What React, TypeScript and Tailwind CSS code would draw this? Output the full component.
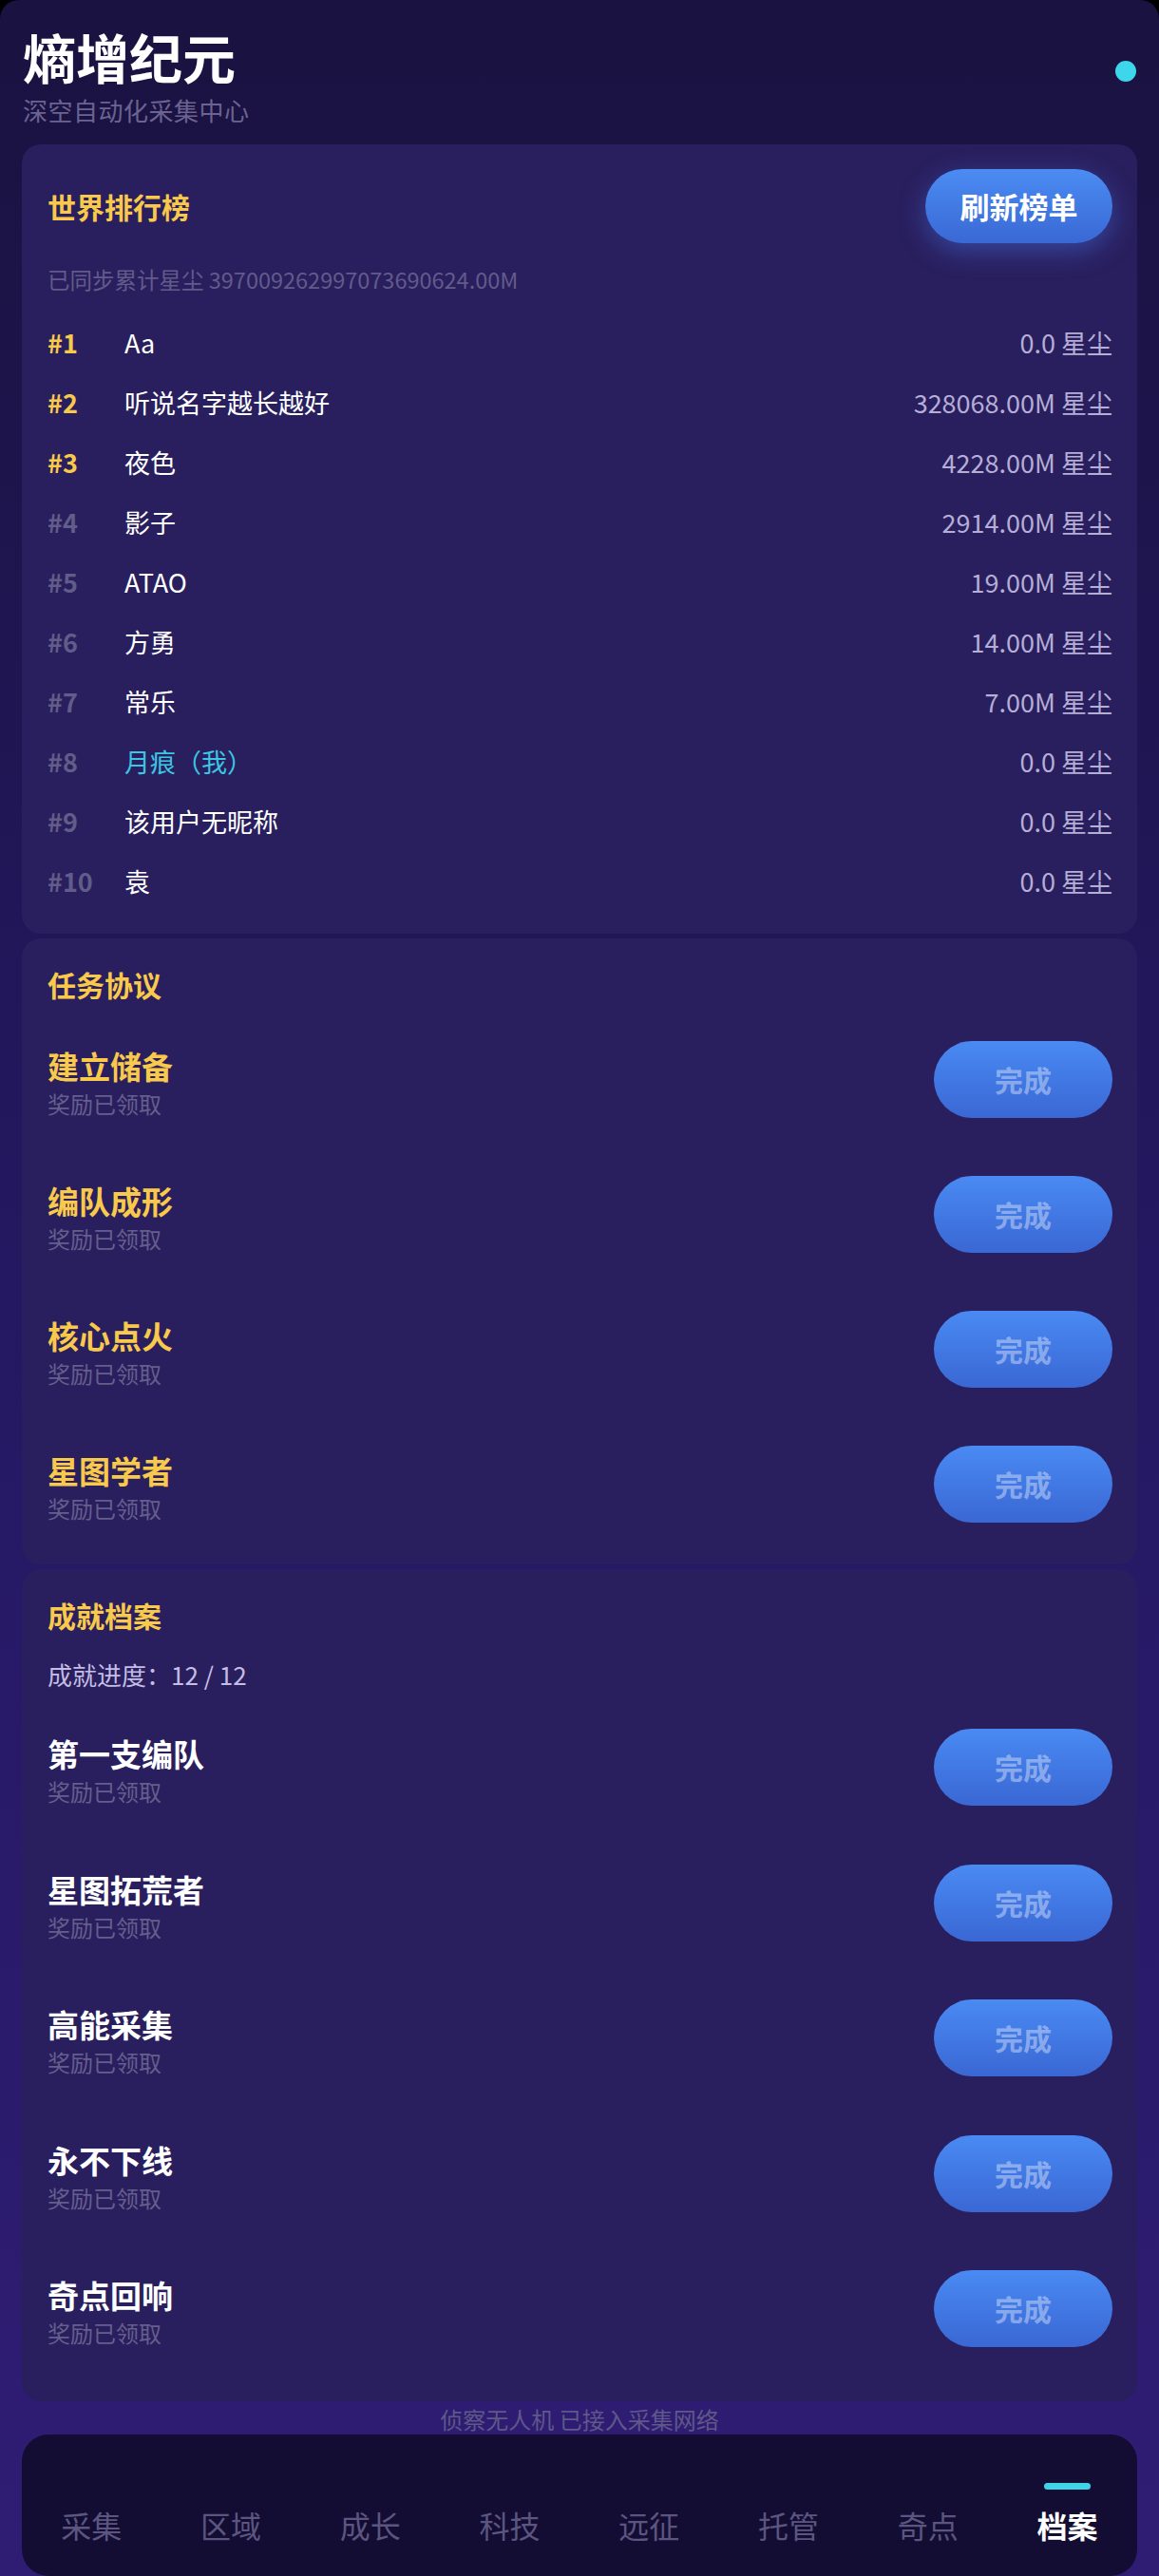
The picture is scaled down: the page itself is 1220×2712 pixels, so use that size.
const ranks = [
  { rank: 1, name: "Aa", value: "0.0 星尘" },
  { rank: 2, name: "听说名字越长越好", value: "328068.00M 星尘" },
  { rank: 3, name: "夜色", value: "4228.00M 星尘" },
  { rank: 4, name: "影子", value: "2914.00M 星尘" },
  { rank: 5, name: "ATAO", value: "19.00M 星尘" },
  { rank: 6, name: "方勇", value: "14.00M 星尘" },
  { rank: 7, name: "常乐", value: "7.00M 星尘" },
  { rank: 8, name: "月痕（我）", value: "0.0 星尘", me: true },
  { rank: 9, name: "该用户无昵称", value: "0.0 星尘" },
  { rank: 10, name: "袁", value: "0.0 星尘" },
]

const tasks = ["建立储备", "编队成形", "核心点火", "星图学者"]
const achievements = ["第一支编队", "星图拓荒者", "高能采集", "永不下线", "奇点回响"]
const tabs = ["采集", "区域", "成长", "科技", "远征", "托管", "奇点", "档案"]

function DoneButton() {
  return (
    <button className="h-[81px] w-[188px] shrink-0 rounded-full bg-gradient-to-b from-[#4a8af3] to-[#3a67d4] text-[30px] font-bold text-white/40">
      完成
    </button>
  )
}

function RewardItem({ name, gold }: { name: string; gold?: boolean }) {
  return (
    <li className="flex h-[81px] items-start justify-between">
      <div className="mt-[5px]">
        <p className={`text-[33px] leading-[42px] font-bold ${gold ? "text-[#f8c94a]" : "text-white"}`}>{name}</p>
        <p className="text-[24px] leading-[38px] text-[#655e8c]">奖励已领取</p>
      </div>
      <DoneButton />
    </li>
  )
}

export default function App() {
  return (
    <div className="min-h-[2712px] bg-black font-['Noto_Sans_CJK_SC',sans-serif]">
      <div className="flex min-h-[2712px] flex-col rounded-t-[20px] bg-gradient-to-b from-[#1a1240] via-[#241862] to-[#2f1d74]">
        {/* header */}
        <header className="flex justify-between px-6 pt-[27px]">
          <div>
            <h1 className="text-[56px] leading-[64px] font-bold text-white">熵增纪元</h1>
            <p className="mt-2 text-[26px] leading-[34px] tracking-[0.5px] text-[#6b6492]">深空自动化采集中心</p>
          </div>
          <span className="mt-[37px] size-[22px] rounded-full bg-[#3ed6ea]" />
        </header>

        <main className="mx-[23px] mt-[19px] flex flex-col gap-[5px]">
          {/* ranking */}
          <section className="rounded-[20px] bg-[#291f5e] pt-[26px] pr-[26px] pb-[23px] pl-[27px]">
            <div className="flex items-center justify-between">
              <h2 className="text-[30px] leading-[40px] font-bold text-[#f8c94a]">世界排行榜</h2>
              <button className="h-[78px] w-[197px] rounded-full bg-gradient-to-b from-[#4b8cf3] to-[#3a68d5] text-[31px] font-bold text-white shadow-[0_8px_28px_rgba(70,120,240,0.45)]">
                刷新榜单
              </button>
            </div>
            <p className="mt-5 text-[23.5px] leading-[36px] text-[#625b8a]">已同步累计星尘 397009262997073690624.00M</p>
            <ul className="mt-[18px]">
              {ranks.map((r) => (
                <li key={r.rank} className="flex h-[63px] items-center text-[27px]">
                  <span className={`w-[81px] font-bold ${r.rank <= 3 ? "text-[#f8c94a]" : "text-[#625c88]"}`}>#{r.rank}</span>
                  <span className={`flex-1 ${r.me ? "text-[#3cc6e2]" : "text-white"}`}>{r.name}</span>
                  <span className="text-[#b5aed6]">{r.value}</span>
                </li>
              ))}
            </ul>
          </section>

          {/* tasks */}
          <section className="rounded-[20px] bg-[#291f5e] pt-7 pr-[26px] pb-[44px] pl-[27px]">
            <h2 className="text-[30px] leading-[40px] font-bold text-[#f8c94a]">任务协议</h2>
            <ul className="mt-10 flex flex-col gap-[61px]">
              {tasks.map((t) => (
                <RewardItem key={t} name={t} gold />
              ))}
            </ul>
          </section>

          {/* achievements */}
          <section className="rounded-[20px] bg-[#291f5e] pt-7 pr-[26px] pb-[57px] pl-[27px]">
            <h2 className="text-[30px] leading-[40px] font-bold text-[#f8c94a]">成就档案</h2>
            <p className="mt-[25px] text-[26px] leading-[36px] text-[#c4bde4]">成就进度：12 / 12</p>
            <ul className="mt-[39px] flex flex-col gap-[61.5px]">
              {achievements.map((a) => (
                <RewardItem key={a} name={a} />
              ))}
            </ul>
          </section>
        </main>

        <p className="mt-[3px] text-center text-[24px] leading-[32px] text-[#5f5888]">侦察无人机 已接入采集网络</p>

        {/* bottom nav */}
        <nav className="mx-[23px] flex h-[149px] rounded-[28px] bg-[#130d33]">
          {tabs.map((t, i) => {
            const active = i === tabs.length - 1
            return (
              <div key={t} className="flex flex-1 flex-col items-center pt-[51px]">
                <span className={`h-[7px] w-[49px] rounded-full ${active ? "bg-[#3ed3e6]" : "bg-transparent"}`} />
                <span className={`mt-[17px] text-[32px] leading-[40px] ${active ? "font-bold text-white" : "text-[#5b5580]"}`}>{t}</span>
              </div>
            )
          })}
        </nav>
      </div>
    </div>
  )
}
